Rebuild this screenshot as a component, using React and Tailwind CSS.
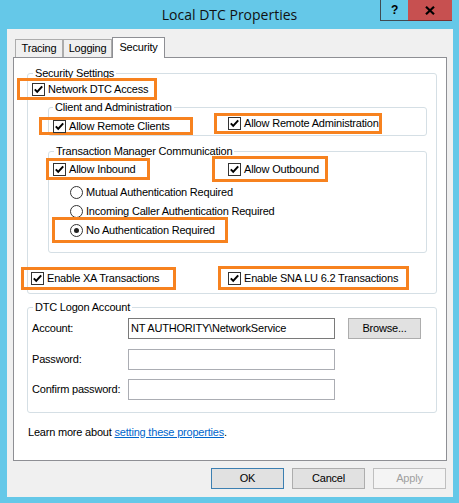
import React from "react";

function Check() {
  return (
    <span className="flex h-[13px] w-[13px] shrink-0 items-center justify-center border border-[#333333] bg-white">
      <svg width="11" height="11" viewBox="0 0 11 11">
        <path d="M1.8 5.4 L4.2 7.9 L9.2 2.3" fill="none" stroke="#000" strokeWidth="2" />
      </svg>
    </span>
  );
}

function Radio({ on }) {
  return (
    <span className="flex h-[13px] w-[13px] shrink-0 items-center justify-center rounded-full border border-[#333333] bg-white">
      {on ? <span className="h-[5px] w-[5px] rounded-full bg-[#222]" /> : null}
    </span>
  );
}

function CheckItem({ label }) {
  return (
    <span className="flex items-center gap-[3px] whitespace-nowrap">
      <Check />
      <span>{label}</span>
    </span>
  );
}

function RadioItem({ label, on }) {
  return (
    <span className="flex items-center gap-[3px] whitespace-nowrap">
      <Radio on={on} />
      <span>{label}</span>
    </span>
  );
}

function Legend({ children, cls }) {
  return <span className={cls}>{children}</span>;
}

export default function App() {
  return (
    <div className="flex h-[503px] w-[459px] flex-col overflow-hidden bg-[#65c8e8] font-[family-name:'Liberation_Sans',Arial,sans-serif] text-[11px] leading-[13px] tracking-[-0.2px] text-black">
      {/* Title bar */}
      <div className="grid h-[29px] shrink-0 grid-cols-[1fr_auto_1fr]">
        <div />
        <div className="pt-[5px] font-[family-name:'Open_Sans',sans-serif] text-[14px] leading-[19px] tracking-normal text-[#111]">
          Local DTC Properties
        </div>
        <div className="flex items-start justify-end pr-[7px]">
          <div className="flex h-[21px] w-[28px] items-center justify-center border-b border-l border-[#3f4b52] text-[12px] font-bold leading-[12px] text-black">
            ?
          </div>
          <div className="flex h-[21px] w-[44px] items-center justify-center border-b border-[#7a3030] bg-[#c75050]">
            <svg width="10" height="9" viewBox="0 0 10 9">
              <path d="M1 0.8 L9 8.2 M9 0.8 L1 8.2" stroke="#000" strokeWidth="2.2" />
            </svg>
          </div>
        </div>
      </div>

      {/* Client area */}
      <div className="ml-[7px] flex h-[468px] w-[446px] flex-col bg-[#f0f0f0]">
        {/* Tabs */}
        <div className="ml-[8px] mt-[8px] flex h-[20px] items-end">
          <div className="flex h-[18px] w-[48px] items-center justify-center border-l border-r border-t border-[#acacac] bg-[#f0f0f0]">
            Tracing
          </div>
          <div className="flex h-[18px] w-[49px] items-center justify-center border-l border-r border-t border-[#acacac] bg-[#f0f0f0]">
            Logging
          </div>
          <div className="relative z-10 -mb-[1px] flex h-[21px] w-[53px] items-center justify-center border-l border-r border-t border-[#8e8f94] bg-white pb-[1px]">
            Security
          </div>
        </div>

        {/* Panel */}
        <div className="mx-[6px] flex h-[404px] flex-col items-start border border-[#8e8f94] bg-white">
          {/* Security Settings */}
          <div className="ml-[13px] mt-[15px] flex h-[221px] w-[410px] flex-col items-start rounded-[3px] border border-[#d5dfe5]">
            <Legend cls="-mt-[7px] ml-[5px] h-[13px] bg-white px-[2px]">Security Settings</Legend>
            <div className="-ml-[11px] -mt-[2px] flex h-[22px] w-[140px] items-center border-[3px] border-[#f7821f] pl-[12px]">
              <CheckItem label="Network DTC Access" />
            </div>

            {/* Client and Administration */}
            <div className="ml-[20px] mt-[7px] flex h-[29px] w-[379px] flex-col items-start rounded-[3px] border border-[#d5dfe5]">
              <Legend cls="-mt-[7px] ml-[4px] h-[13px] bg-white px-[2px]">Client and Administration</Legend>
              <div className="mt-[3px] flex items-start">
                <div className="-ml-[10px] flex h-[18px] w-[154px] items-center border-[3px] border-[#f7821f] pl-[11px]">
                  <CheckItem label="Allow Remote Clients" />
                </div>
                <div className="-mt-[4px] ml-[21px] flex h-[21px] w-[168px] items-center border-[3px] border-[#f7821f] pl-[11px]">
                  <CheckItem label="Allow Remote Administration" />
                </div>
              </div>
            </div>

            {/* Transaction Manager Communication */}
            <div className="ml-[20px] mt-[15px] flex h-[102px] w-[379px] flex-col items-start rounded-[3px] border border-[#d5dfe5]">
              <Legend cls="-mt-[7px] ml-[5px] h-[13px] bg-white px-[2px]">Transaction Manager Communication</Legend>
              <div className="flex h-[22px] items-start">
                <div className="-ml-[3px] flex h-[22px] w-[104px] items-center border-[3px] border-[#f7821f] pl-[4px]">
                  <CheckItem label="Allow Inbound" />
                </div>
                <div className="-mt-[2px] ml-[62px] flex h-[26px] w-[116px] items-center border-[3px] border-[#f7821f] pl-[13px]">
                  <CheckItem label="Allow Outbound" />
                </div>
              </div>
              <div className="ml-[21px] mt-[6px] flex h-[13px] items-center">
                <RadioItem label="Mutual Authentication Required" />
              </div>
              <div className="ml-[21px] mt-[6px] flex h-[13px] items-center">
                <RadioItem label="Incoming Caller Authentication Required" />
              </div>
              <div className="-mt-[1px] ml-[3px] flex h-[26px] w-[176px] items-center border-[3px] border-[#f7821f] pl-[15px]">
                <RadioItem label="No Authentication Required" on />
              </div>
            </div>

            <div className="mt-[13px] flex items-start">
              <div className="-ml-[7px] mt-[1px] flex h-[23px] w-[155px] items-center border-[3px] border-[#f7821f] pl-[7px]">
                <CheckItem label="Enable XA Transactions" />
              </div>
              <div className="ml-[42px] flex h-[24px] w-[191px] items-center border-[3px] border-[#f7821f] pl-[7px]">
                <CheckItem label="Enable SNA LU 6.2 Transactions" />
              </div>
            </div>
          </div>

          {/* DTC Logon Account */}
          <div className="ml-[13px] mt-[13px] flex h-[106px] w-[410px] flex-col items-start rounded-[3px] border border-[#d5dfe5]">
            <Legend cls="-mt-[7px] ml-[5px] h-[13px] bg-white px-[2px]">DTC Logon Account</Legend>
            <div className="ml-[4px] mt-[4px] flex h-[21px] items-center">
              <span className="w-[96px]">Account:</span>
              <div className="flex h-[21px] w-[207px] items-center border border-[#7a7a7a] bg-white pl-[2px]">
                NT AUTHORITY\NetworkService
              </div>
              <div className="ml-[13px] flex h-[21px] w-[73px] items-center justify-center border border-[#adadad] bg-[#e1e1e1]">
                Browse...
              </div>
            </div>
            <div className="ml-[4px] mt-[10px] flex h-[21px] items-center">
              <span className="w-[96px]">Password:</span>
              <div className="h-[21px] w-[207px] border border-[#abadb3] bg-white" />
            </div>
            <div className="ml-[4px] mt-[9px] flex h-[21px] items-center">
              <span className="w-[96px]">Confirm password:</span>
              <div className="h-[21px] w-[207px] border border-[#abadb3] bg-white" />
            </div>
          </div>

          <div className="ml-[14px] mt-[13px] h-[13px] whitespace-nowrap">
            Learn more about <span className="text-[#0066cc] underline">setting these properties</span>.
          </div>
        </div>

        {/* Buttons */}
        <div className="mt-[7px] flex justify-end gap-[8px] pr-[7px]">
          <div className="flex h-[21px] w-[73px] items-center justify-center border border-[#3c7fb1] bg-[#e1e1e1]">OK</div>
          <div className="flex h-[21px] w-[73px] items-center justify-center border border-[#adadad] bg-[#e1e1e1]">Cancel</div>
          <div className="flex h-[21px] w-[73px] items-center justify-center border border-[#bfbfbf] bg-[#f4f4f4] text-[#a0a0a0]">Apply</div>
        </div>
      </div>
    </div>
  );
}
